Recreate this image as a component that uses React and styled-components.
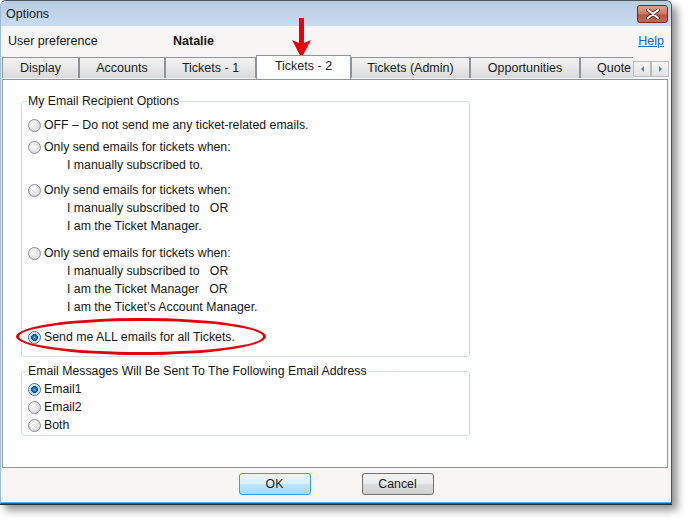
import * as React from 'react';
import styled, { createGlobalStyle, css } from 'styled-components';

const GlobalStyle = createGlobalStyle`
	html, body {
		margin: 0;
		padding: 0;
		background: #ffffff;
	}
	body {
		font-family: 'Liberation Sans', Arial, sans-serif;
		font-size: 12.3px;
		color: #161616;
	}
`;

const Page = styled.div`
	width: 689px;
	height: 521px;
	overflow: hidden;
`;

const Window = styled.div`
	position: relative;
	box-sizing: border-box;
	width: 672px;
	height: 504px;
	display: flex;
	flex-direction: column;
	background: #f7f6f4;
	border: 1px solid #4b5560;
	border-left-color: #9dbde0;
	border-radius: 6px 6px 0 0;
	box-shadow: 0 1px 0 #2a2f35, 5px 6px 9px rgba(0, 0, 0, 0.45);
`;

const TitleBar = styled.div`
	height: 25px;
	flex: none;
	display: flex;
	align-items: center;
	justify-content: space-between;
	padding: 0 3px 0 5px;
	background: linear-gradient(#b8cce4, #c4d6eb 70%, #cbdcee);
	border-radius: 5px 5px 0 0;
`;

const Title = styled.span`
	font-size: 12.5px;
	color: #1c1c1c;
`;

const CloseButton = styled.div`
	width: 29px;
	height: 16px;
	margin-top: 1px;
	display: flex;
	align-items: center;
	justify-content: center;
	border: 1px solid #6e2a22;
	border-radius: 3px;
	background: linear-gradient(#dfa08e, #cc7863 50%, #b9533f 55%, #c66a55);
`;

const HeaderRow = styled.div`
	height: 30px;
	flex: none;
	display: flex;
	align-items: center;
	padding: 0 7px;
	font-size: 12.5px;
`;

const HeaderLabel = styled.span`
	width: 165px;
`;

const UserName = styled.span`
	font-weight: bold;
	flex: 1;
`;

const HelpLink = styled.a`
	color: #0b66d4;
	text-decoration: underline;
	cursor: pointer;
`;

const TabRow = styled.div`
	height: 23px;
	flex: none;
	display: flex;
	align-items: flex-end;
	padding-left: 1px;
	position: relative;
	z-index: 1;
`;

const TabStrip = styled.div`
	width: 631px;
	height: 24px;
	display: flex;
	align-items: flex-end;
	overflow: hidden;
`;

const Tab = styled.div`
	flex: none;
	box-sizing: border-box;
	height: 21px;
	margin-bottom: 1px;
	width: ${p => p.$w}px;
	display: flex;
	align-items: center;
	justify-content: center;
	white-space: nowrap;
	font-size: 12.5px;
	border: 1px solid #8f9297;
	border-bottom: none;
	background: linear-gradient(#f4f4f4, #e9e9e9 45%, #d9d9d9);
	color: #1b1b1b;
	${p => p.$active && css`
		height: 24px;
		margin-bottom: 0;
		padding-bottom: 3px;
		background: #ffffff;
		border-color: #8e959c;
	`}
	${p => p.$clip && css`
		justify-content: flex-start;
		padding-left: 16px;
	`}
`;

const ScrollButtons = styled.div`
	display: flex;
	margin-bottom: 2px;
`;

const ScrollButton = styled.div`
	width: 18px;
	height: 16px;
	box-sizing: border-box;
	display: flex;
	align-items: center;
	justify-content: center;
	border: 1px solid #b9bcbf;
	background: linear-gradient(#f6f6f6, #e3e3e3);
	&::after {
		content: '';
		border-top: 3px solid transparent;
		border-bottom: 3px solid transparent;
		${p => p.$dir === 'left'
			? css`border-right: 3px solid #5a79a4;`
			: css`border-left: 3px solid #5a79a4;`}
	}
`;

const Panel = styled.div`
	flex: none;
	box-sizing: border-box;
	height: 389px;
	margin: 0 3px 0 1px;
	padding: 14px 0 0 18px;
	background: #ffffff;
	border: 1px solid #8e959c;
`;

const Group = styled.fieldset`
	box-sizing: border-box;
	width: 449px;
	margin: ${p => p.$mt || 0}px 0 0 0;
	padding: ${p => p.$pt}px 6px ${p => p.$pb}px 6px;
	border: 1px solid #d3dde6;
	border-radius: 3px;
	min-inline-size: 0;
`;

const Legend = styled.legend`
	padding: 0 1px;
	margin-left: -1px;
	line-height: 14px;
	background: #ffffff;
`;

const Option = styled.div`
	display: flex;
	flex-direction: column;
	margin-top: ${p => p.$mt || 0}px;
`;

const OptionLine = styled.div`
	display: flex;
	align-items: center;
	height: 18px;
	white-space: nowrap;
`;

const SubLine = styled.div`
	height: 18px;
	line-height: 18px;
	padding-left: 39px;
	white-space: pre;
`;

const Radio = styled.span`
	flex: none;
	box-sizing: border-box;
	width: 13px;
	height: 13px;
	margin-right: 3px;
	border-radius: 50%;
	border: 1px solid #8b8f93;
	background: radial-gradient(circle at 40% 35%, #ffffff 0, #e4e4e4 55%, #c8c8c8 100%);
	${p => p.$checked && css`
		border-color: #3c6e9e;
		background: radial-gradient(circle at 50% 50%, #6fb2ea 0, #1a5fa8 2.3px, #0e3f79 3.2px, #9fd1f3 3.6px, #d7eefc 4.8px, #eef4f8 5.5px);
	`}
`;

const Footer = styled.div`
	flex: 1;
	display: flex;
	justify-content: center;
	align-items: flex-start;
	gap: 51px;
	padding-top: 5px;
	border-bottom: 1px solid #52b3dd;
`;

const Button = styled.div`
	box-sizing: border-box;
	width: 72px;
	height: 22px;
	display: flex;
	align-items: center;
	justify-content: center;
	border-radius: 3px;
	border: 1px solid #707070;
	background: linear-gradient(#f3f3f3, #ebebeb 48%, #dddddd 52%, #cfcfcf);
	color: #1b1b1b;
	${p => p.$primary && css`
		border-color: #3c9fd8;
		background: linear-gradient(#e8f5fd, #d9effc 48%, #bee6fd 52%, #a7d9f5);
	`}
`;

const Arrow = styled.svg`
	position: absolute;
	left: 289px;
	top: 16px;
`;

const Highlight = styled.div`
	position: absolute;
	left: 15px;
	top: 317px;
	width: 250px;
	height: 37px;
	box-sizing: border-box;
	border: 3px solid #e2000d;
	border-radius: 50%;
`;

const recipientOptions = [
	{ label: 'OFF – Do not send me any ticket-related emails.', lines: [], mt: 0 },
	{ label: 'Only send emails for tickets when:', lines: ['I manually subscribed to.'], mt: 4 },
	{ label: 'Only send emails for tickets when:', lines: ['I manually subscribed to   OR', 'I am the Ticket Manager.'], mt: 7 },
	{
		label: 'Only send emails for tickets when:',
		lines: ['I manually subscribed to   OR', 'I am the Ticket Manager   OR', 'I am the Ticket’s Account Manager.'],
		mt: 9,
	},
	{ label: 'Send me ALL emails for all Tickets.', lines: [], mt: 12, checked: true },
];

const tabs = [
	{ label: 'Display', w: 77 },
	{ label: 'Accounts', w: 86 },
	{ label: 'Tickets - 1', w: 91 },
	{ label: 'Tickets - 2', w: 95, active: true },
	{ label: 'Tickets (Admin)', w: 119 },
	{ label: 'Opportunities', w: 110 },
	{ label: 'Quote', w: 86, clip: true },
];

function App() {
	return (
		<>
			<GlobalStyle />
			<Page>
				<Window>
					<TitleBar>
						<Title>Options</Title>
						<CloseButton>
							<svg width="14" height="10" viewBox="0 0 14 10">
								<path d="M2 1 L12 9 M12 1 L2 9" stroke="#5a1d16" strokeWidth="3.6" strokeLinecap="round" />
								<path d="M2 1 L12 9 M12 1 L2 9" stroke="#ffffff" strokeWidth="2.2" strokeLinecap="round" />
							</svg>
						</CloseButton>
					</TitleBar>

					<HeaderRow>
						<HeaderLabel>User preference</HeaderLabel>
						<UserName>Natalie</UserName>
						<HelpLink>Help</HelpLink>
					</HeaderRow>

					<TabRow>
						<TabStrip>
							{tabs.map(t => (
								<Tab key={t.label} $w={t.w} $active={t.active} $clip={t.clip}>{t.label}</Tab>
							))}
						</TabStrip>
						<ScrollButtons>
							<ScrollButton $dir="left" />
							<ScrollButton $dir="right" />
						</ScrollButtons>
					</TabRow>

					<Panel>
						<Group $pt={8} $pb={10}>
							<Legend>My Email Recipient Options</Legend>
							{recipientOptions.map((o, i) => (
								<Option key={i} $mt={o.mt}>
									<OptionLine>
										<Radio $checked={o.checked} />
										{o.label}
									</OptionLine>
									{o.lines.map(l => <SubLine key={l}>{l}</SubLine>)}
								</Option>
							))}
						</Group>

						<Group $mt={7} $pt={2} $pb={1}>
							<Legend>Email Messages Will Be Sent To The Following Email Address</Legend>
							<OptionLine><Radio $checked />Email1</OptionLine>
							<OptionLine><Radio />Email2</OptionLine>
							<OptionLine><Radio />Both</OptionLine>
						</Group>
					</Panel>

					<Footer>
						<Button $primary>OK</Button>
						<Button>Cancel</Button>
					</Footer>

					<Arrow width="24" height="42" viewBox="0 0 24 42">
						<rect x="9" y="1" width="5" height="26" fill="#e8000c" />
						<path d="M2 23 L11.5 27 L21 23 L11.5 41 Z" fill="#e8000c" />
					</Arrow>
					<Highlight />
				</Window>
			</Page>
		</>
	);
}

export default App;
